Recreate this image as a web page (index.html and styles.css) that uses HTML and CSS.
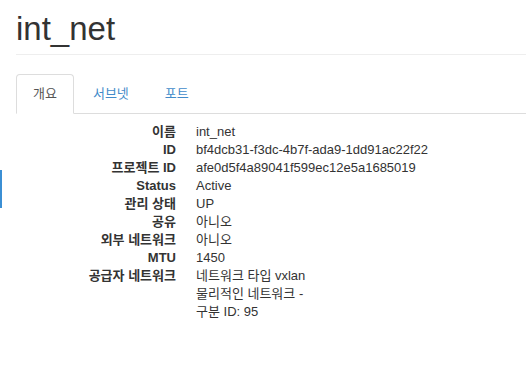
FILE: index.html
```html
<!DOCTYPE html>
<html lang="ko">
<head>
    <meta charset="UTF-8">
    <meta name="viewport" content="width=device-width, initial-scale=1.0">
    <title>int_net</title>
    <link rel="stylesheet" href="styles.css">
</head>
<body>
    <div class="sidebar">
        <div class="sidebar-active"></div>
    </div>

    <div class="main">
        <div class="page-header">
            <h1>int_net</h1>
        </div>

        <ul class="nav-tabs">
            <li class="active"><a href="#">개요</a></li>
            <li><a href="#">서브넷</a></li>
            <li><a href="#">포트</a></li>
        </ul>

        <dl class="dl-horizontal">
            <dt>이름</dt>
            <dd>int_net</dd>
            <dt>ID</dt>
            <dd>bf4dcb31-f3dc-4b7f-ada9-1dd91ac22f22</dd>
            <dt>프로젝트 ID</dt>
            <dd>afe0d5f4a89041f599ec12e5a1685019</dd>
            <dt>Status</dt>
            <dd>Active</dd>
            <dt>관리 상태</dt>
            <dd>UP</dd>
            <dt>공유</dt>
            <dd>아니오</dd>
            <dt>외부 네트워크</dt>
            <dd>아니오</dd>
            <dt>MTU</dt>
            <dd>1450</dd>
            <dt>공급자 네트워크</dt>
            <dd>네트워크 타입 vxlan<br>물리적인 네트워크 -<br>구분 ID: 95</dd>
        </dl>
    </div>
</body>
</html>
```

FILE: styles.css
```css
body {
    margin: 0;
    display: flex;
    font-family: "Liberation Sans", "Noto Sans CJK KR", sans-serif;
    font-size: 13px;
    line-height: 18px;
    color: #333;
    background: #fff;
    overflow: hidden;
}
.sidebar {
    width: 2px;
    flex: none;
}
.sidebar-active {
    margin-top: 170px;
    height: 38px;
    background-color: #3b8fd4;
}
.main {
    flex: 1;
    padding-left: 14px;
}
.page-header {
    padding-bottom: 7px;
    border-bottom: 1px solid #eee;
    margin-top: 11px;
}
h1 {
    margin: 0;
    font-size: 33px;
    font-weight: normal;
    line-height: 36px;
}
.nav-tabs {
    list-style: none;
    margin: 19px 0 0;
    padding: 0;
    display: flex;
    border-bottom: 1px solid #ddd;
}
.nav-tabs li {
    margin-right: 2px;
    margin-bottom: -1px;
}
.nav-tabs a {
    display: block;
    padding: 10px 16px;
    border: 1px solid transparent;
    border-radius: 4px 4px 0 0;
    color: #428bca;
    text-decoration: none;
}
.nav-tabs .active a {
    color: #555;
    border-color: #ddd #ddd transparent;
    background: #fff;
}
.dl-horizontal {
    margin: 9px 0 0;
    display: grid;
    grid-template-columns: 160px 1fr;
    column-gap: 20px;
}
.dl-horizontal dt {
    font-weight: bold;
    text-align: right;
}
.dl-horizontal dd {
    margin: 0;
}
```
